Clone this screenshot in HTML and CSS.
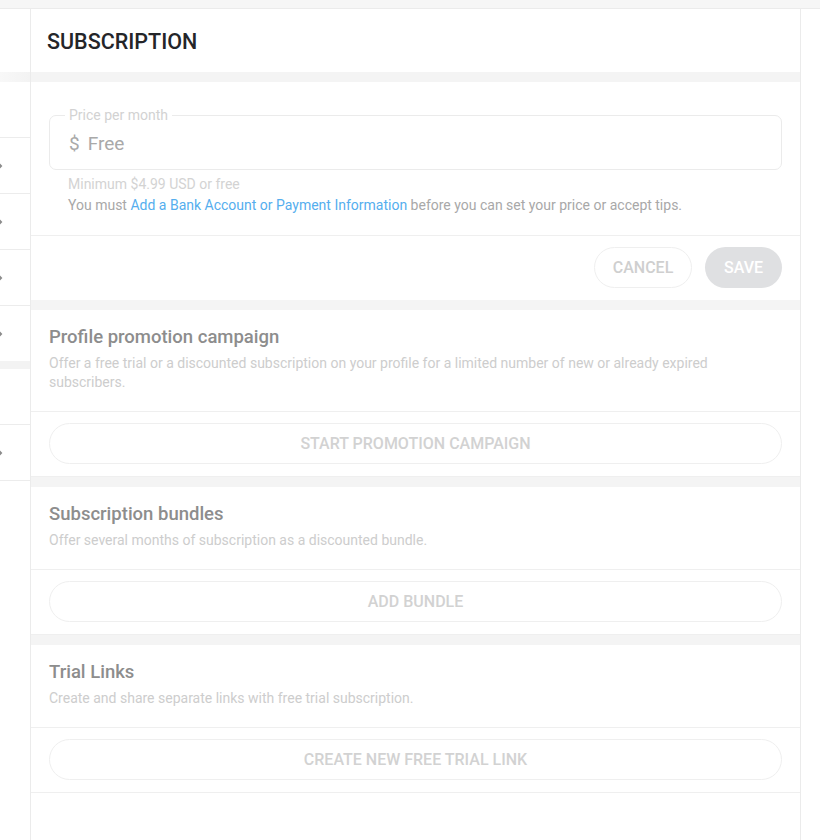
FILE: index.html
```html
<!DOCTYPE html>
<html lang="en">
<head>
<meta charset="utf-8">
<title>Subscription</title>
<link rel="stylesheet" href="styles.css">
</head>
<body>
<div class="topbar"></div>
<div class="layout">
  <aside class="sidebar">
    <div class="side-head"></div>
    <div class="side-band"></div>
    <div class="side-space"></div>
    <div class="side-row"><svg class="chev" width="6" height="10" viewBox="0 0 6 10"><path d="M-3 1 L1 5 L-3 9" fill="none" stroke="#8c8c8c" stroke-width="2"/></svg></div>
    <div class="side-row"><svg class="chev" width="6" height="10" viewBox="0 0 6 10"><path d="M-3 1 L1 5 L-3 9" fill="none" stroke="#8c8c8c" stroke-width="2"/></svg></div>
    <div class="side-row"><svg class="chev" width="6" height="10" viewBox="0 0 6 10"><path d="M-3 1 L1 5 L-3 9" fill="none" stroke="#8c8c8c" stroke-width="2"/></svg></div>
    <div class="side-row last"><svg class="chev" width="6" height="10" viewBox="0 0 6 10"><path d="M-3 1 L1 5 L-3 9" fill="none" stroke="#8c8c8c" stroke-width="2"/></svg></div>
    <div class="side-band small"></div>
    <div class="side-space2"></div>
    <div class="side-row"><svg class="chev" width="6" height="10" viewBox="0 0 6 10"><path d="M-3 1 L1 5 L-3 9" fill="none" stroke="#8c8c8c" stroke-width="2"/></svg></div>
  </aside>
  <main class="main">
    <header class="header"><h1>SUBSCRIPTION</h1></header>
    <div class="band"></div>

    <section class="price">
      <fieldset class="field">
        <legend>Price per month</legend>
        <div class="field-value"><span class="dollar">$</span><span>Free</span></div>
      </fieldset>
      <p class="hint">Minimum $4.99 USD or free</p>
      <p class="note">You must <a href="#" class="link">Add a Bank Account or Payment Information</a> before you can set your price or accept tips.</p>
    </section>
    <div class="actions">
      <button class="btn-outline">CANCEL</button>
      <button class="btn-fill">SAVE</button>
    </div>
    <div class="band"></div>

    <section class="block">
      <h2>Profile promotion campaign</h2>
      <p class="desc">Offer a free trial or a discounted subscription on your profile for a limited number of new or already expired subscribers.</p>
    </section>
    <div class="wide-row"><button class="btn-wide">START PROMOTION CAMPAIGN</button></div>
    <div class="band"></div>

    <section class="block">
      <h2>Subscription bundles</h2>
      <p class="desc">Offer several months of subscription as a discounted bundle.</p>
    </section>
    <div class="wide-row"><button class="btn-wide">ADD BUNDLE</button></div>
    <div class="band"></div>

    <section class="block">
      <h2>Trial Links</h2>
      <p class="desc">Create and share separate links with free trial subscription.</p>
    </section>
    <div class="wide-row"><button class="btn-wide">CREATE NEW FREE TRIAL LINK</button></div>
  </main>
</div>
</body>
</html>
```

FILE: styles.css
```css
* { box-sizing: border-box; }
html, body {
  margin: 0;
  padding: 0;
  background: #fff;
  font-family: Roboto, "Noto Sans", "Liberation Sans", sans-serif;
}
body {
  width: 820px;
  height: 840px;
  overflow: hidden;
}
.topbar {
  height: 9px;
  background: #f6f6f6;
  border-bottom: 1px solid #ebebeb;
}
.layout {
  display: flex;
  height: 831px;
}
.sidebar {
  width: 30px;
  flex: none;
  display: flex;
  flex-direction: column;
}
.side-head { height: 63px; }
.side-band { height: 10px; background: linear-gradient(to right, #f8f8f8, #f3f3f3); }
.side-band.small { height: 8px; background: #f3f3f3; }
.side-space { height: 56px; border-bottom: 1px solid #ececec; }
.side-space2 { height: 56px; border-bottom: 1px solid #ececec; }
.side-row {
  height: 56px;
  border-bottom: 1px solid #ececec;
  display: flex;
  align-items: center;
}
.side-row.last { border-bottom: none; height: 55px; }
.chev { display: block; }

.main {
  width: 771px;
  flex: none;
  border-left: 1px solid #ebebeb;
  border-right: 1px solid #ebebeb;
  display: flex;
  flex-direction: column;
}
.header {
  height: 63px;
  display: flex;
  align-items: center;
  padding: 0 16px;
}
.header h1 {
  margin: 0;
  font-size: 21.5px;
  font-weight: 500;
  color: #242529;
  padding-top: 1px;
}
.band {
  height: 10px;
  background: #f4f4f4;
  flex: none;
}

.price {
  padding: 25px 18px 21px;
  border-bottom: 1px solid #efefef;
}
.field {
  margin: 0;
  padding: 0 19px 5px;
  border: 1px solid #ebebeb;
  border-radius: 7px;
  min-width: 0;
}
.field legend {
  margin-left: -4px;
  padding: 0 4px;
  font-size: 14px;
  line-height: 16px;
  color: #d2d2d2;
}
.field-value {
  height: 41px;
  display: flex;
  align-items: center;
  font-size: 19px;
  color: #a9a9a9;
}
.dollar { margin-right: 8px; }
.hint {
  margin: 6px 0 0 19px;
  font-size: 14px;
  line-height: 16px;
  color: #d3d3d3;
}
.note {
  margin: 4px 0 0 19px;
  font-size: 14px;
  line-height: 18px;
  color: #a8a8a8;
}
.link {
  color: #55aeee;
  text-decoration: none;
}

.actions {
  height: 64px;
  display: flex;
  align-items: center;
  justify-content: flex-end;
  gap: 13px;
  padding: 0 18px 1px;
}
button {
  font-family: inherit;
  font-weight: 500;
  font-size: 16px;
  cursor: pointer;
}
.btn-outline {
  width: 98px;
  height: 41px;
  border-radius: 21px;
  border: 1px solid #efefef;
  background: #fff;
  color: #cfcfcf;
}
.btn-fill {
  width: 77px;
  height: 41px;
  border-radius: 21px;
  border: none;
  background: #dfe0e2;
  color: #fff;
}

.block {
  padding: 16px 18px 19px;
  border-bottom: 1px solid #efefef;
}
.block h2 {
  margin: 0;
  font-size: 18.5px;
  line-height: 22px;
  font-weight: 500;
  color: #8d8d8d;
}
.desc {
  margin: 6px 0 0;
  max-width: 690px;
  font-size: 14px;
  line-height: 19px;
  color: #cdcdcd;
}
.wide-row {
  padding: 11px 18px 12px;
  border-bottom: 1px solid #efefef;
}
.btn-wide {
  display: block;
  width: 100%;
  height: 41px;
  border-radius: 21px;
  border: 1px solid #efefef;
  background: #fff;
  color: #d2d2d2;
}
```
